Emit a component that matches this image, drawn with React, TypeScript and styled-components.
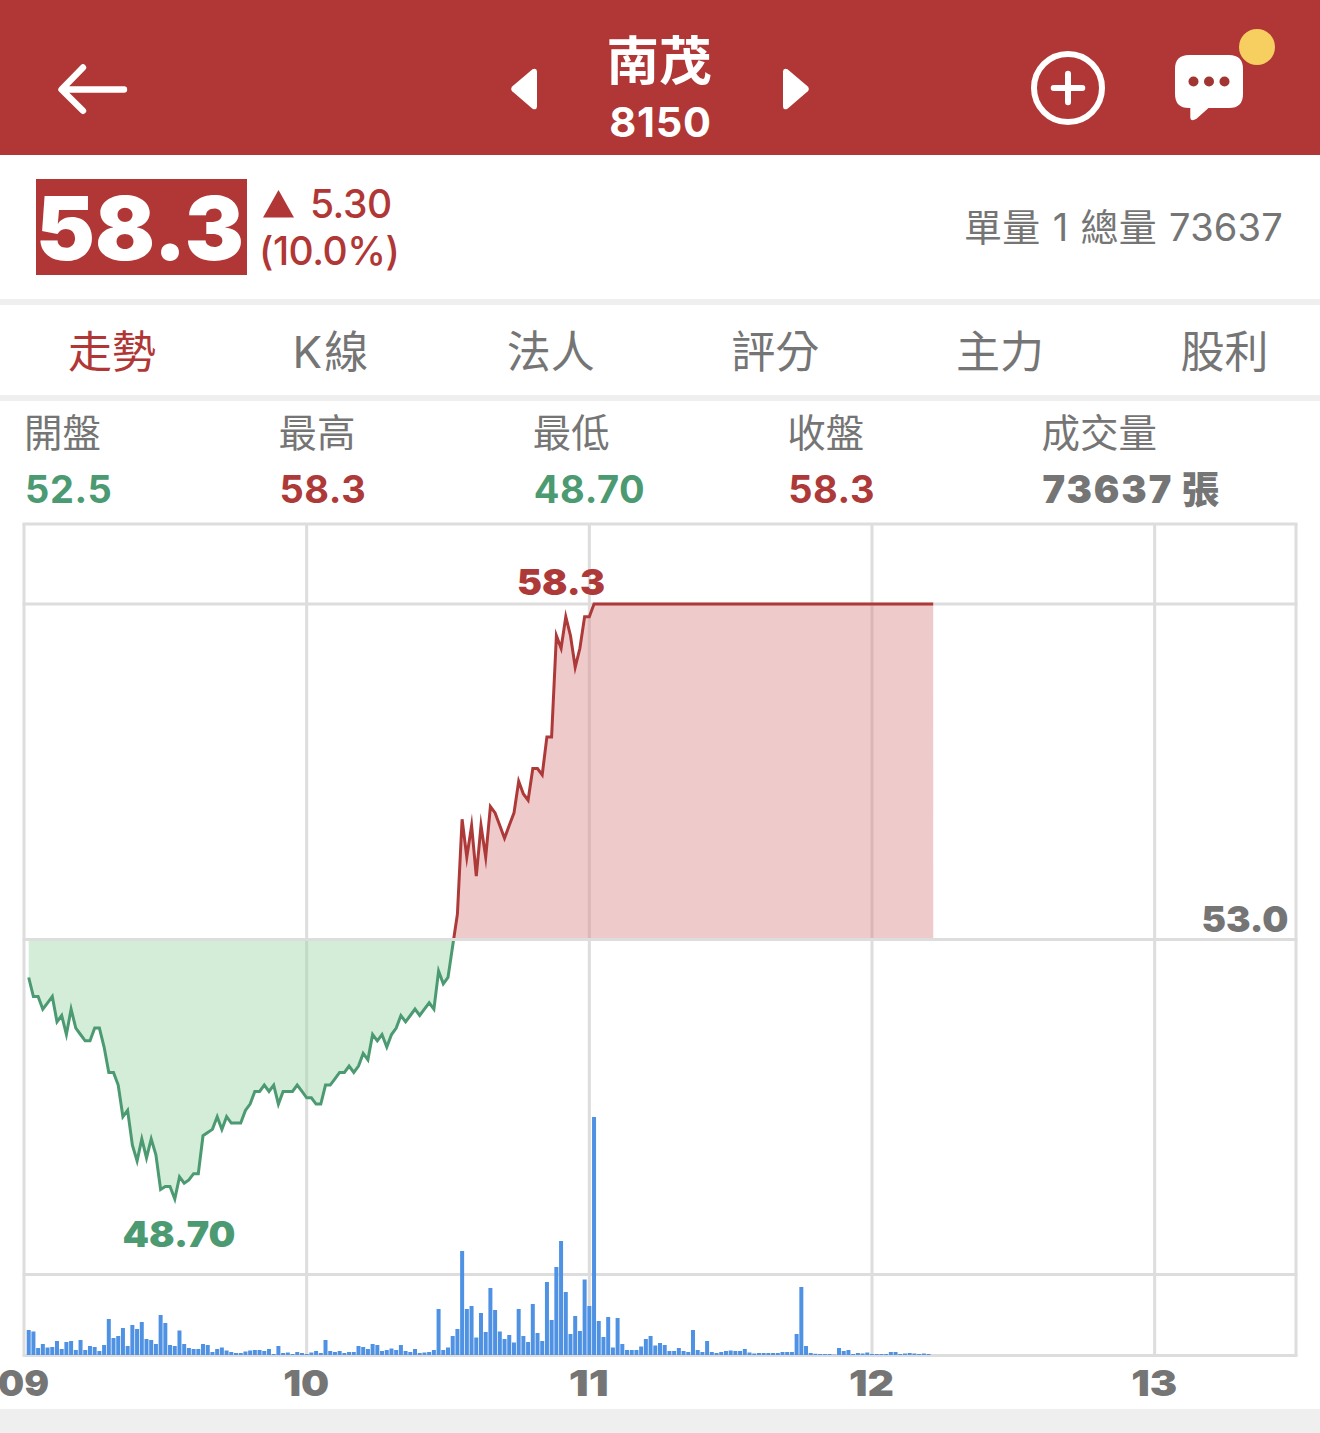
import React from "react";
import styled, { createGlobalStyle } from "styled-components";

const RED = "#b03735";
const GREEN = "#4c9a72";
const GREY = "#757575";
const RULE = "#efefef";
const FONT = `Inter, "Noto Sans CJK TC", sans-serif`;

const GlobalStyle = createGlobalStyle`
  * { box-sizing: border-box; }
  body { margin: 0; background: #fff; font-family: ${FONT}; color: ${GREY}; }
`;

const Screen = styled.main`
  width: 1320px;
  height: 1433px;
  display: flex;
  flex-direction: column;
  overflow: hidden;
  background: #fff;
`;

const Header = styled.header`
  flex: none;
  height: 155.4px;
  padding: 0 77px 0 58px;
  display: grid;
  grid-template-columns: 453px 298px 1fr;
  background: ${RED};
`;

const HeaderSide = styled.div<{ $end?: boolean }>`
  display: flex;
  align-items: center;
  justify-content: ${(p) => (p.$end ? "flex-end" : "flex-start")};
  gap: 70px;
  padding-top: ${(p) => (p.$end ? 20 : 23)}px;
`;

const IconButton = styled.button`
  position: relative;
  display: flex;
  padding: 0;
  border: 0;
  background: none;
  color: #fff;
`;

const Badge = styled.span`
  position: absolute;
  top: -26px;
  right: -32px;
  width: 36px;
  height: 36px;
  border-radius: 50%;
  background: #f6cf60;
`;

const Switcher = styled.div`
  display: flex;
  align-items: center;
  justify-content: space-between;
  padding-top: 22px;
`;

const Title = styled.div`
  display: flex;
  flex-direction: column;
  align-items: center;
  margin-top: -26px;
  padding-top: 18px;
  color: #fff;
`;

const Name = styled.h1`
  margin: 0;
  padding-right: 2px;
  font-size: 52.5px;
  line-height: 74px;
  font-weight: 600;
`;

const Code = styled.span`
  font-size: 41.5px;
  line-height: 48px;
  font-weight: 700;
  letter-spacing: 0.8px;
  padding-left: 1px;
`;

const Quote = styled.section`
  flex: none;
  height: 143.6px;
  padding: 0 37px 0 36px;
  display: flex;
  align-items: center;
`;

const Price = styled.div`
  width: 211px;
  height: 96px;
  padding: 1px 3px 0 0;
  display: flex;
  align-items: center;
  justify-content: center;
  background: ${RED};
  color: #fff;
  font-size: 88.5px;
  line-height: 94px;
  font-weight: 900;
`;

const Change = styled.div`
  margin-left: 12px;
  color: ${RED};
  font-size: 39px;
  line-height: 47px;
  font-weight: 450;
`;

const ChangeRow = styled.div`
  display: flex;
  align-items: center;
  gap: 15px;
  letter-spacing: -0.5px;
`;

const Volume = styled.div`
  margin-left: auto;
  font-size: 38px;
  line-height: 48px;
  font-weight: 400;
  letter-spacing: 0.2px;
  word-spacing: 1.3px;
`;

const Divider = styled.hr`
  flex: none;
  width: 100%;
  height: 6px;
  margin: 0;
  border: 0;
  background: ${RULE};
`;

const Tabs = styled.nav`
  flex: none;
  height: 90px;
  padding: 4px 0 0 68px;
  display: flex;
  align-items: center;
  gap: 136.6px;
`;

const Tab = styled.a<{ $active?: boolean; $latin?: boolean }>`
  flex: none;
  font-size: 44px;
  line-height: 60px;
  font-weight: 380;
  letter-spacing: ${(p) => (p.$latin ? 2 : 0)}px;
  color: ${(p) => (p.$active ? RED : GREY)};
`;

const Stats = styled.dl`
  flex: none;
  height: 121px;
  margin: 0;
  padding: 3px 24px 0;
  display: grid;
  grid-template-columns: repeat(5, 1fr);
`;

const Stat = styled.div`
  display: flex;
  flex-direction: column;
`;

const StatLabel = styled.dt`
  font-size: 38.5px;
  line-height: 58px;
  font-weight: 380;
  white-space: nowrap;
`;

const StatValue = styled.dd<{ $color: string; $heavy?: boolean }>`
  margin: 0;
  padding-left: 1px;
  font-size: 38px;
  line-height: 55px;
  font-weight: ${(p) => (p.$heavy ? 900 : 720)};
  letter-spacing: ${(p) => (p.$heavy ? 1.9 : 0.6)}px;
  word-spacing: ${(p) => (p.$heavy ? -1 : 0)}px;
  white-space: nowrap;
  color: ${(p) => p.$color};
`;

const ChartSvg = styled.svg`
  flex: none;
  display: block;
  width: 1320px;
  height: 887px;
`;

const ChartText = styled.text`
  font-family: ${FONT};
  font-size: 35.5px;
  font-weight: 900;
`;

const Footer = styled.footer`
  flex: 1;
  background: ${RULE};
`;

/* Difference from the reference price, in ticks of 0.1, one entry a minute from 09:01. */
const ticks: number[] = [
  -6, -9, -9, -11, -10, -9, -13, -12, -15, -11, -14, -15, -16, -16, -14, -14, -17, -21, -21, -23,
  -28, -27, -32.5, -35, -31.5, -34.5, -31.5, -34, -39.5, -39, -39, -41, -37.5, -38.5, -38, -37, -37,
  -31, -30.5, -30, -28, -30, -28, -29, -29, -29, -27, -26, -24, -24, -23, -24, -23, -26, -24, -24,
  -24, -23, -24, -25, -25, -26, -26, -23, -23, -22, -21, -21, -20, -21, -20, -18, -19, -15, -16,
  -15, -17, -15, -14, -12, -13, -12, -11, -12, -11, -10, -11, -5, -7, -6, -1, 4, 19, 13, 18, 10, 18,
  13, 21, 20, 18, 16, 18, 20, 25, 23, 22, 27, 27, 26, 32, 32, 48, 46, 51, 48, 43, 46, 51, 51,
  ...Array(73).fill(53),
];

const volumes: number[] = [
  25, 23.5, 7, 11, 7.5, 8, 14, 6, 13, 14, 5, 15, 5, 9, 8, 4, 10, 36, 17, 19, 27, 9, 30, 26, 33, 16,
  15, 11, 40, 32, 10, 9, 24.5, 11, 7, 6, 6, 11, 10, 3, 6, 7.5, 4.5, 3, 2, 2, 3.5, 4.5, 5, 5, 4, 6, 1,
  9, 2, 2.5, 1, 3, 2, 1, 2.5, 4, 2, 15, 4, 3, 4, 2, 3, 3, 9, 8, 6, 11, 10, 4, 5, 6.5, 5, 10, 4, 3, 6,
  2, 2.5, 3, 5, 46, 5, 7.5, 19, 26, 104, 46, 49, 17.5, 42, 23, 67, 45, 23.5, 16, 20, 12.5, 46, 19, 13,
  51, 22, 14, 73, 35, 88, 114, 63, 21, 39, 24, 75.5, 49, 238, 34, 18, 38, 7.5, 37, 11, 5, 5, 5, 8.5,
  16, 19, 9.5, 12, 10, 4, 4, 7, 4, 3, 25, 5, 3, 14, 3, 2, 3, 4, 4.5, 4, 4, 6, 2.5, 1.5, 2, 2, 2, 2,
  2, 3, 3, 3, 21, 68, 9, 2, 1.2, 1, 1, 1, 0.4, 7, 4, 5, 1, 2, 1.5, 2.5, 1, 1, 1, 1, 3, 3, 1, 1.5, 2,
  1.5, 1, 1.5, 1,
];

const TOP = 522;
const LEFT = 24;
const RIGHT = 1296;
const BASE = 939.5 - TOP;
const MINUTE = (RIGHT - LEFT) / 270;
const TICK = 6.33;

const minuteX = (m: number) => LEFT + m * MINUTE;
const points = ticks.map((t, i) => `${minuteX(i + 1).toFixed(1)},${(BASE - t * TICK).toFixed(1)}`);
const linePath = `M${points.join("L")}`;
const areaPath = `M${minuteX(1)},${BASE}L${points.join("L")}L${minuteX(ticks.length)},${BASE}Z`;
const hours = ["09", "10", "11", "12", "13"];
const hourWidths = [51, 46, 40, 45, 46];

function Chart() {
  const rows = [524, 604, 939.5, 1274.5, 1355.5].map((y) => y - TOP);
  return (
    <ChartSvg viewBox="0 0 1320 887">
      <defs>
        <clipPath id="above"><rect x="0" y="0" width="1320" height={BASE} /></clipPath>
        <clipPath id="below"><rect x="0" y={BASE} width="1320" height="400" /></clipPath>
      </defs>
      <g stroke="#dddddd" strokeWidth="3">
        {hours.map((h, i) => (
          <line key={h} x1={minuteX(i * 60)} x2={minuteX(i * 60)} y1={rows[0]} y2={rows[4]} />
        ))}
        <line x1={RIGHT} x2={RIGHT} y1={rows[0]} y2={rows[4]} />
        {rows.map((y) => (
          <line key={y} x1={LEFT - 1.5} x2={RIGHT + 1.5} y1={y} y2={y} />
        ))}
      </g>
      <g clipPath="url(#above)">
        <path d={areaPath} fill="rgba(219,137,139,0.45)" />
        <path d={linePath} fill="none" stroke="#ad3a39" strokeWidth="3" strokeMiterlimit="10" />
      </g>
      <g clipPath="url(#below)">
        <path d={areaPath} fill="rgba(159,215,168,0.45)" />
        <path d={linePath} fill="none" stroke="#4c9a72" strokeWidth="3" strokeMiterlimit="10" />
      </g>
      <line x1={LEFT} x2={RIGHT} y1={BASE} y2={BASE} stroke="#dddddd" strokeWidth="3" />
      <g fill="#4f92e3">
        {volumes.map((v, i) => (
          <rect key={i} x={minuteX(i + 1) - 2} y={833 - v} width="4" height={v} />
        ))}
      </g>
      <ChartText x="517" y="73" fill="#ad3a39" textLength="88" lengthAdjust="spacingAndGlyphs">58.3</ChartText>
      <ChartText x="122.5" y="725" fill={GREEN} textLength="113" lengthAdjust="spacingAndGlyphs">48.70</ChartText>
      <ChartText x="1201.5" y="409.5" fill={GREY} textLength="87" lengthAdjust="spacingAndGlyphs">53.0</ChartText>
      {hours.map((h, i) => (
        <ChartText
          key={h}
          x={minuteX(i * 60) - 0.5}
          y="874"
          fill={GREY}
          textAnchor="middle"
          textLength={hourWidths[i]}
          lengthAdjust="spacingAndGlyphs"
        >
          {h}
        </ChartText>
      ))}
    </ChartSvg>
  );
}

const tabs = ["走勢", "K線", "法人", "評分", "主力", "股利"];

const stats = [
  { label: "開盤", value: "52.5", color: GREEN },
  { label: "最高", value: "58.3", color: "#ad3a39" },
  { label: "最低", value: "48.70", color: GREEN },
  { label: "收盤", value: "58.3", color: "#ad3a39" },
  { label: "成交量", value: "73637 張", color: GREY, heavy: true },
];

export default function App() {
  return (
    <>
      <GlobalStyle />
      <Screen lang="zh-Hant">
        <Header>
          <HeaderSide>
            <IconButton aria-label="back">
              <svg width="70" height="52" viewBox="0 0 70 52" fill="none" stroke="currentColor" strokeWidth="6.4" strokeLinecap="round" strokeLinejoin="round">
                <path d="M66 26.5H4M25 4.5L3.5 26.5L25 47.8" />
              </svg>
            </IconButton>
          </HeaderSide>
          <Switcher>
            <IconButton aria-label="previous">
              <svg width="27" height="42" viewBox="0 0 27 42" fill="currentColor">
                <path d="M1.2 18.6L21.5 1.3Q25.8 -0.4 26 3.5V38.5Q25.8 42.4 21.5 40.7L1.2 23.2Q-0.8 21 1.2 18.6Z" />
              </svg>
            </IconButton>
            <Title>
              <Name>南茂</Name>
              <Code>8150</Code>
            </Title>
            <IconButton aria-label="next">
              <svg width="27" height="42" viewBox="0 0 27 42" fill="currentColor">
                <path d="M25.8 18.6L5.5 1.3Q1.2 -0.4 1 3.5V38.5Q1.2 42.4 5.5 40.7L25.8 23.2Q27.8 21 25.8 18.6Z" />
              </svg>
            </IconButton>
          </Switcher>
          <HeaderSide $end>
            <IconButton aria-label="add">
              <svg width="74" height="74" viewBox="0 0 74 74" fill="none" stroke="currentColor" strokeWidth="6" strokeLinecap="round">
                <circle cx="37" cy="37" r="34" />
                <path d="M22.7 37H51.3M37 22.7V51.3" />
              </svg>
            </IconButton>
            <IconButton aria-label="messages">
              <svg width="68" height="66" viewBox="0 0 68 66">
                <path fill="currentColor" d="M14 0H54Q68 0 68 14V39Q68 53 54 53H33.5L21.5 63.8Q15.5 67.5 15.3 62V53H14Q0 53 0 39V14Q0 0 14 0Z" />
                <g fill="#a13531">
                  <circle cx="18.5" cy="26.5" r="5" />
                  <circle cx="34" cy="26.5" r="5" />
                  <circle cx="49.5" cy="26.5" r="5" />
                </g>
              </svg>
              <Badge />
            </IconButton>
          </HeaderSide>
        </Header>
        <Quote>
          <Price>58.3</Price>
          <Change>
            <ChangeRow>
              <svg width="36" height="28" viewBox="0 0 36 28">
                <path d="M4 27.5L19.5 0L35 27.5Z" fill={RED} />
              </svg>
              5.30
            </ChangeRow>
            <ChangeRow>(10.0%)</ChangeRow>
          </Change>
          <Volume>單量 1 總量 73637</Volume>
        </Quote>
        <Divider />
        <Tabs>
          {tabs.map((t, i) => (
            <Tab key={t} $active={i === 0} $latin={t.startsWith("K")}>{t}</Tab>
          ))}
        </Tabs>
        <Divider />
        <Stats>
          {stats.map((s) => (
            <Stat key={s.label}>
              <StatLabel>{s.label}</StatLabel>
              <StatValue $color={s.color} $heavy={s.heavy}>{s.value}</StatValue>
            </Stat>
          ))}
        </Stats>
        <Chart />
        <Footer />
      </Screen>
    </>
  );
}
